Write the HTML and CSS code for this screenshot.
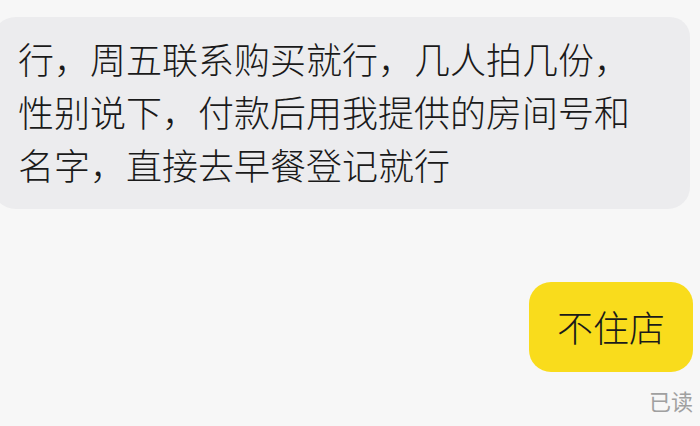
FILE: index.html
```html
<!DOCTYPE html>
<html>
<head>
	<meta charset="utf-8">
	<title>聊天</title>
	<link rel="stylesheet" href="styles.css">
</head>
<body>
	<div class="chat">
		<div class="bubble incoming">行，周五联系购买就行，几人拍几份，<br>性别说下，付款后用我提供的房间号和<br>名字，直接去早餐登记就行</div>

		<div class="row outgoing-row">
			<div class="bubble outgoing">不住店</div>
		</div>
		<div class="read">已读</div>
	</div>
</body>
</html>
```

FILE: styles.css
```css
body {
	margin : 0;
	background : #f7f7f7;
	font-family : "Noto Sans CJK SC", "Noto Sans", sans-serif;
	color : #1a1a1a;
	overflow : hidden;
}
.chat {
	padding : 17px 7px 0 0;
}
.bubble {
	font-size : 36px;
	font-weight : 300;
	line-height : 53px;
}
.incoming {
	margin : 0 3px 0 -8px;
	padding : 15px 0 18px 26px;
	background : #ececee;
	border-radius : 24px 20px 22px 24px;
}
.outgoing-row {
	display : flex;
	justify-content : flex-end;
	margin-top : 73px;
}
.outgoing {
	padding : 18px 28px 19px 28px;
	background : #f9dc1c;
	border-radius : 22px;
}
.read {
	margin-top : 13px;
	text-align : right;
	font-size : 22px;
	font-weight : 400;
	line-height : 30px;
	color : #a0a0a0;
}
```
